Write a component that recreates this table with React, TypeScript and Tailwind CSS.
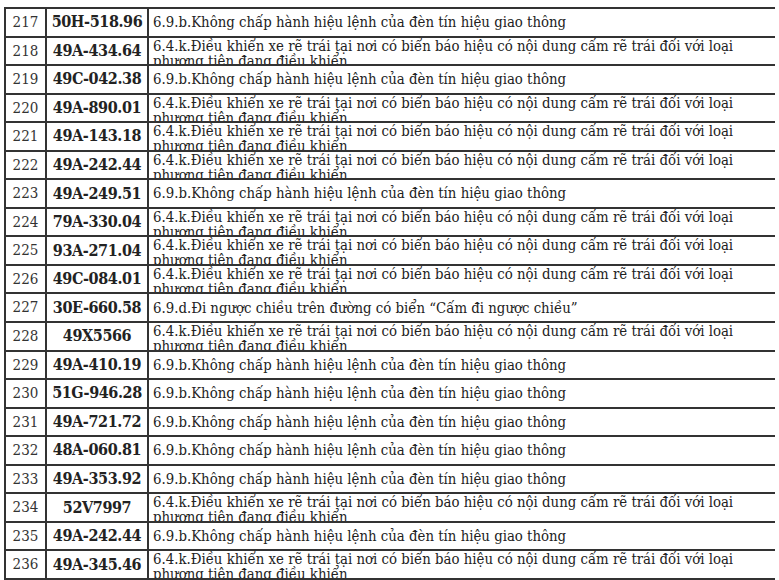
import React from 'react';

const A = '6.9.b.Không chấp hành hiệu lệnh của đèn tín hiệu giao thông';
const C = '6.9.d.Đi ngược chiều trên đường có biển “Cấm đi ngược chiều”';
const B1 = '6.4.k.Điều khiển xe rẽ trái tại nơi có biển báo hiệu có nội dung cấm rẽ trái đối với loại';
const B2 = 'phương tiện đang điều khiển';

type Row = { no: number; plate: string; kind: 'A' | 'B' | 'C' };

const rows: Row[] = [
  { no: 217, plate: '50H-518.96', kind: 'A' },
  { no: 218, plate: '49A-434.64', kind: 'B' },
  { no: 219, plate: '49C-042.38', kind: 'A' },
  { no: 220, plate: '49A-890.01', kind: 'B' },
  { no: 221, plate: '49A-143.18', kind: 'B' },
  { no: 222, plate: '49A-242.44', kind: 'B' },
  { no: 223, plate: '49A-249.51', kind: 'A' },
  { no: 224, plate: '79A-330.04', kind: 'B' },
  { no: 225, plate: '93A-271.04', kind: 'B' },
  { no: 226, plate: '49C-084.01', kind: 'B' },
  { no: 227, plate: '30E-660.58', kind: 'C' },
  { no: 228, plate: '49X5566', kind: 'B' },
  { no: 229, plate: '49A-410.19', kind: 'A' },
  { no: 230, plate: '51G-946.28', kind: 'A' },
  { no: 231, plate: '49A-721.72', kind: 'A' },
  { no: 232, plate: '48A-060.81', kind: 'A' },
  { no: 233, plate: '49A-353.92', kind: 'A' },
  { no: 234, plate: '52V7997', kind: 'B' },
  { no: 235, plate: '49A-242.44', kind: 'A' },
  { no: 236, plate: '49A-345.46', kind: 'B' },
];

const serif = { fontFamily: '"DejaVu Serif", "Liberation Serif", serif' };

export default function App() {
  return (
    <div className="w-[779px] h-[580px] bg-white overflow-hidden pt-[7px] pl-[4px] font-stretch-condensed" style={serif}>
      <div className="w-[771px] border-t-2 border-l-2 border-[#333]">
        {rows.map((r) => (
          <div key={r.no} className="flex h-[28.55px] border-b-2 border-[#333] box-border">
            <div className="w-[41px] shrink-0 border-r-2 border-[#333] flex items-center justify-center text-[15px] text-[#333]">
              {r.no}
            </div>
            <div className="w-[102px] shrink-0 border-r-2 border-[#333] flex items-center justify-center text-[16px] tracking-[-0.4px] font-bold text-[#222] whitespace-nowrap">
              {r.plate}
            </div>
            {r.kind === 'B' ? (
              <div className="flex-1 overflow-hidden pl-[4px] text-[14.8px] leading-[15px] text-[#222] whitespace-nowrap">
                {B1}
                <br />
                {B2}
              </div>
            ) : (
              <div className="flex-1 flex items-center overflow-hidden pl-[4px] text-[14.8px] text-[#222] whitespace-nowrap">
                {r.kind === 'A' ? A : C}
              </div>
            )}
          </div>
        ))}
      </div>
    </div>
  );
}
